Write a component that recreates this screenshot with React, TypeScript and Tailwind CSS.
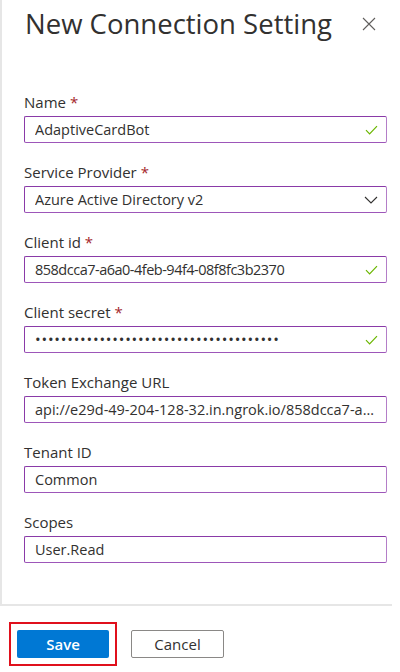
type Field = {
  label: string;
  value: string;
  required?: boolean;
  kind?: "text" | "select" | "secret";
  valid?: boolean;
  tight?: boolean;
};

const fields: Field[] = [
  { label: "Name", value: "AdaptiveCardBot", required: true, valid: true },
  { label: "Service Provider", value: "Azure Active Directory v2", required: true, kind: "select" },
  { label: "Client id", value: "858dcca7-a6a0-4feb-94f4-08f8fc3b2370", required: true, valid: true, tight: true },
  { label: "Client secret", value: "••••••••••••••••••••••••••••••••••••••", required: true, kind: "secret", valid: true },
  { label: "Token Exchange URL", value: "api://e29d-49-204-128-32.in.ngrok.io/858dcca7-a6a0-4feb-94f4-08f8fc3b2370" },
  { label: "Tenant ID", value: "Common" },
  { label: "Scopes", value: "User.Read" },
];

const CheckIcon = () => (
  <svg width="13" height="10" viewBox="0 0 13 10" fill="none">
    <path d="M1 5.2 L4.6 8.8 L12 1.2" stroke="#6bb700" strokeWidth="1.2" />
  </svg>
);

const ChevronIcon = () => (
  <svg width="14" height="8" viewBox="0 0 14 8" fill="none">
    <path d="M1 1 L7 7 L13 1" stroke="#323130" strokeWidth="1.1" />
  </svg>
);

const CloseIcon = () => (
  <svg width="14" height="14" viewBox="0 0 14 14" fill="none">
    <path d="M1 1 L13 13 M13 1 L1 13" stroke="#605e5c" strokeWidth="1.1" />
  </svg>
);

const FormField = ({ field }: { field: Field }) => (
  <div className="flex flex-col">
    <label className="h-[20px] text-[15px] leading-[20px] text-[#323130]">
      {field.label}
      {field.required && <span className="ml-[4px] text-[#a4262c]">*</span>}
    </label>
    <div className="mt-[4px] flex h-[27px] items-center rounded-[2px] border border-[#8a3aa8] border-r-[#b47ec8] border-b-[#9d56b9] pl-[10px] pr-[8px]">
      <span
        className={`flex-1 truncate text-[#323130] ${
          field.kind === "secret"
            ? "text-[15px] tracking-[0.8px]"
            : field.tight
              ? "text-[14.5px] tracking-[-0.5px]"
              : "text-[14.5px]"
        }`}
      >
        {field.value}
      </span>
      {field.valid && <CheckIcon />}
      {field.kind === "select" && <ChevronIcon />}
    </div>
  </div>
);

const App = () => {
  return (
    <div
      className="flex h-[672px] w-[400px] flex-col bg-white"
      style={{ fontFamily: '"Segoe UI", "Open Sans", sans-serif' }}
    >
      <div className="h-[606px] w-[392px] border-b-2 border-l-2 border-[#e6e6e6]">
        <div className="flex h-[48px] items-center justify-between pl-[23px] pr-[16px]">
          <h1 className="text-[27.5px] leading-[36px] text-[#323130]">New Connection Setting</h1>
          <CloseIcon />
        </div>
        <div className="mt-[44px] flex flex-col gap-[19px] pl-[22px] pr-[5px]">
          {fields.map((field) => (
            <FormField key={field.label} field={field} />
          ))}
        </div>
      </div>
      <div className="flex items-center gap-[14px] pl-[9px] pt-[16px]">
        <div className="border-2 border-[#e0101c] p-[6px]">
          <button className="h-[28px] w-[92px] rounded-[2px] bg-[#0078d4] text-[15px] font-semibold text-white">
            Save
          </button>
        </div>
        <button className="h-[28px] w-[93px] rounded-[2px] border border-[#8a8886] text-[15px] text-[#323130]">
          Cancel
        </button>
      </div>
    </div>
  );
};

export default App;
